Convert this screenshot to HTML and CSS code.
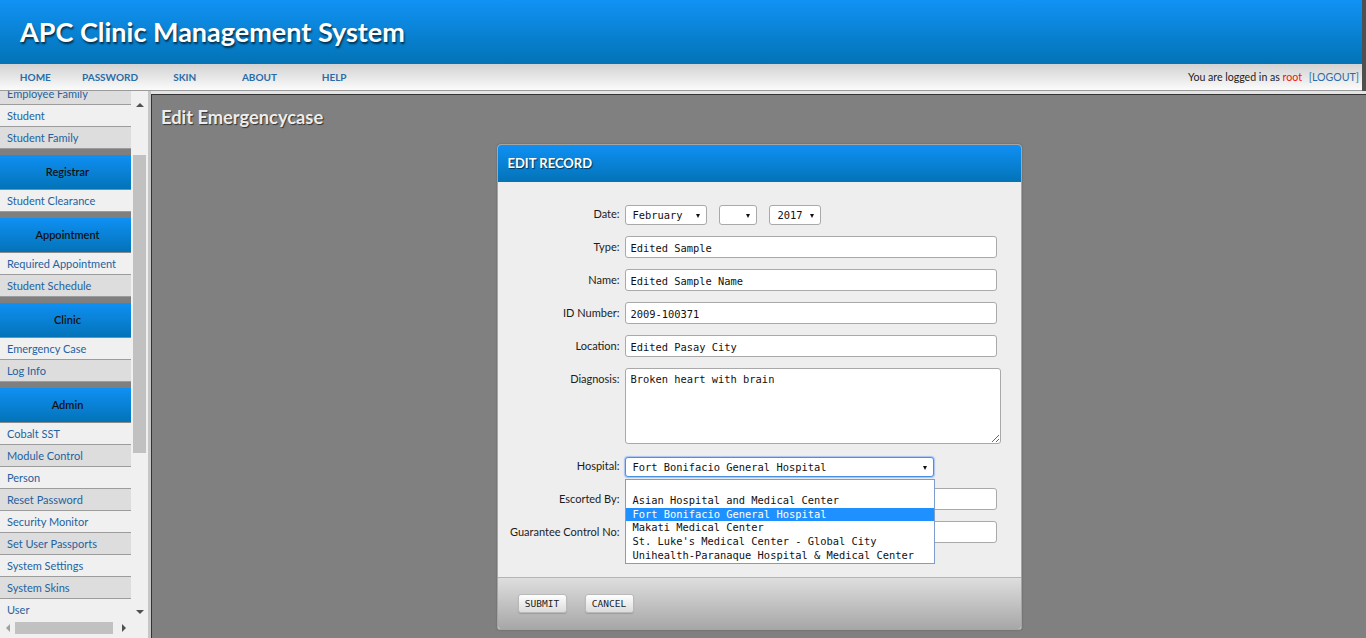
FILE: index.html
```html
<!DOCTYPE html>
<html lang="en">
<head>
<meta charset="utf-8">
<title>APC Clinic Management System</title>
<link rel="stylesheet" href="styles.css">
</head>
<body>
<div class="page">
  <header class="topbar"><h1>APC Clinic Management System</h1></header>
  <nav class="menubar">
    <ul class="menu">
      <li>HOME</li><li>PASSWORD</li><li>SKIN</li><li>ABOUT</li><li>HELP</li>
    </ul>
    <div class="user">You are logged in as <span class="root">root</span> <span class="logout">[LOGOUT]</span></div>
  </nav>
  <div class="workspace">
    <aside class="sidebar">
      <div class="side-main">
        <div class="side-view">
          <div class="side-list">
            <div class="item dark">Employee Family</div>
            <div class="item">Student</div>
            <div class="item dark">Student Family</div>
            <div class="sep"></div>
            <div class="group">Registrar</div>
            <div class="item">Student Clearance</div>
            <div class="sep"></div>
            <div class="group">Appointment</div>
            <div class="item">Required Appointment</div>
            <div class="item dark">Student Schedule</div>
            <div class="sep"></div>
            <div class="group">Clinic</div>
            <div class="item">Emergency Case</div>
            <div class="item dark">Log Info</div>
            <div class="sep"></div>
            <div class="group">Admin</div>
            <div class="item">Cobalt SST</div>
            <div class="item dark">Module Control</div>
            <div class="item">Person</div>
            <div class="item dark">Reset Password</div>
            <div class="item">Security Monitor</div>
            <div class="item dark">Set User Passports</div>
            <div class="item">System Settings</div>
            <div class="item dark">System Skins</div>
            <div class="item">User</div>
          </div>
        </div>
        <div class="vscroll">
          <div class="sb-btn up"><span class="tri tri-up"></span></div>
          <div class="vtrack"><div class="vthumb"></div></div>
          <div class="sb-btn down"><span class="tri tri-down"></span></div>
        </div>
      </div>
      <div class="hscroll-row">
        <div class="hscroll">
          <div class="hbtn"><span class="tri tri-left"></span></div>
          <div class="htrack"><div class="hthumb"></div></div>
          <div class="hbtn"><span class="tri tri-right"></span></div>
        </div>
        <div class="corner"></div>
      </div>
    </aside>
    <main class="content">
      <h2 class="page-title">Edit Emergencycase</h2>
      <section class="dialog">
        <div class="dialog-head">EDIT RECORD</div>
        <div class="dialog-body">
          <div class="form">
            <label class="lbl">Date:</label>
            <div class="field date-field">
              <div class="sel sel-month">February<span class="arrow"></span></div>
              <div class="sel sel-day"><span class="arrow"></span></div>
              <div class="sel sel-year">2017<span class="arrow"></span></div>
            </div>
            <label class="lbl">Type:</label>
            <div class="field"><input class="txt" type="text" value="Edited Sample"></div>
            <label class="lbl">Name:</label>
            <div class="field"><input class="txt" type="text" value="Edited Sample Name"></div>
            <label class="lbl">ID Number:</label>
            <div class="field"><input class="txt" type="text" value="2009-100371"></div>
            <label class="lbl">Location:</label>
            <div class="field"><input class="txt" type="text" value="Edited Pasay City"></div>
            <label class="lbl">Diagnosis:</label>
            <div class="field"><textarea class="area">Broken heart with brain</textarea></div>
            <label class="lbl">Hospital:</label>
            <div class="field hosp-field">
              <div class="sel sel-hosp">Fort Bonifacio General Hospital<span class="arrow"></span></div>
              <ul class="dropdown">
                <li>&nbsp;</li>
                <li>Asian Hospital and Medical Center</li>
                <li class="active">Fort Bonifacio General Hospital</li>
                <li>Makati Medical Center</li>
                <li>St. Luke's Medical Center - Global City</li>
                <li>Unihealth-Paranaque Hospital &amp; Medical Center</li>
              </ul>
            </div>
            <label class="lbl">Escorted By:</label>
            <div class="field"><input class="txt" type="text" value=""></div>
            <label class="lbl">Guarantee Control No:</label>
            <div class="field"><input class="txt" type="text" value=""></div>
          </div>
        </div>
        <div class="dialog-foot">
          <button class="btn" type="button">SUBMIT</button>
          <button class="btn" type="button">CANCEL</button>
        </div>
      </section>
    </main>
  </div>
</div>
</body>
</html>
```
FILE: styles.css
```css
* { box-sizing: border-box; }
html, body { margin: 0; padding: 0; }
body {
  background: #4f4f4f;
  font-family: Lato, "Liberation Sans", sans-serif;
  overflow: hidden;
}
.page {
  width: 1366px;
  height: 638px;
  display: flex;
  flex-direction: column;
}

/* header */
.topbar {
  width: 1362px;
  height: 64px;
  flex: 0 0 64px;
  background: linear-gradient(#1192f5, #0273b5);
  display: flex;
  align-items: center;
  padding-left: 20px;
}
.topbar h1 {
  margin: 0;
  color: #fff;
  font-size: 27px;
  font-weight: 700;
  text-shadow: 1px 2px 2px rgba(0,0,0,.65);
  position: relative;
  top: -1px;
}

/* menubar */
.menubar {
  width: 1362px;
  height: 27px;
  flex: 0 0 27px;
  background: linear-gradient(#d2d2d2, #fbfbfb);
  border-bottom: 1px solid #9a9a9a;
  display: flex;
  align-items: center;
  justify-content: space-between;
  padding-right: 3px;
}
.menu {
  list-style: none;
  margin: 0 0 0 -2px;
  padding: 0;
  display: flex;
}
.menu li {
  width: 74.7px;
  text-align: center;
  font-size: 10px;
  font-weight: 700;
  color: #2a6ca8;
}
.user { font-size: 10.6px; color: #222; }
.user .root { color: #ee1111; }
.user .logout { color: #2a6ca8; margin-left: 4px; }

/* workspace */
.workspace {
  flex: 1;
  display: flex;
  min-height: 0;
  background: #e4e4e4;
}
.sidebar {
  width: 151px;
  flex: 0 0 151px;
  border-right: 3px solid #c6c6c6;
  display: flex;
  flex-direction: column;
  background: #f0f0f0;
}
.side-main { flex: 1; display: flex; min-height: 0; }
.side-view { width: 131px; overflow: hidden; }
.side-list { margin-top: -8px; }
.item {
  height: 22px;
  line-height: 21px;
  border-bottom: 1px solid #9c9c9c;
  padding-left: 7px;
  font-size: 11px;
  color: #2462a0;
  background: #f0f0f0;
  white-space: nowrap;
}
.item.dark { background: #dddddd; }
.sep { height: 6px; background: #7f7f7f; }
.group {
  height: 35px;
  line-height: 33px;
  border-bottom: 1px solid #8a8a8a;
  background: linear-gradient(#0f90f4, #0373b8);
  text-align: center;
  padding-left: 4px;
  font-size: 11px;
  font-weight: 600;
  color: #111;
}

/* fake scrollbars */
.vscroll {
  width: 17px;
  background: #f0f0f0;
  display: flex;
  flex-direction: column;
}
.sb-btn { display: flex; justify-content: center; }
.sb-btn.up { height: 22px; padding-top: 12px; }
.sb-btn.down { height: 17px; align-items: center; }
.vtrack { flex: 1; padding: 42px 2px 0; }
.vthumb { height: 298px; background: #c1c1c1; }
.tri { width: 0; height: 0; border-style: solid; display: block; }
.tri-up { border-width: 0 4px 4px 4px; border-color: transparent transparent #505050 transparent; }
.tri-down { border-width: 4px 4px 0 4px; border-color: #505050 transparent transparent transparent; }
.tri-left { border-width: 4px 4px 4px 0; border-color: transparent #a0a0a0 transparent transparent; }
.tri-right { border-width: 4px 0 4px 4px; border-color: transparent transparent transparent #505050; }
.hscroll-row { height: 18px; display: flex; }
.hscroll { width: 131px; height: 16px; display: flex; background: #f0f0f0; }
.hbtn { width: 15px; display: flex; align-items: center; justify-content: center; }
.htrack { flex: 1; padding: 2px 0; }
.hthumb { height: 12px; background: #c1c1c1; margin-right: 3px; }
.corner { width: 17px; background: #f0f0f0; }

/* main */
.content {
  flex: 1;
  margin-top: 3px;
  background: #808080;
  border-top: 1px solid #333;
  border-left: 1px solid #333;
  min-width: 0;
}
.page-title {
  margin: 0;
  padding: 11px 0 0 9px;
  line-height: 22px;
  font-size: 18.3px;
  font-weight: 700;
  color: #ececec;
  text-shadow: 1px 1px 1px #333;
}
.dialog {
  width: 525px;
  margin: 16px auto 0;
  border: 1px solid #a5a5a5;
  border-radius: 4px 4px 3px 3px;
  background: #eeeeee;
  box-shadow: 0 0 2px rgba(0,0,0,.25);
}
.dialog-head {
  height: 37px;
  line-height: 37px;
  padding-left: 10px;
  background: linear-gradient(#0f90f4, #0373b8);
  border-radius: 3px 3px 0 0;
  color: #fff;
  font-size: 13px;
  font-weight: 700;
  text-shadow: 1px 1px 1px rgba(0,0,0,.6);
}
.dialog-body {
  height: 395px;
  padding: 21px 0 0 10px;
}
.form {
  display: grid;
  grid-template-columns: 112px auto;
  column-gap: 5px;
  row-gap: 11px;
  align-items: start;
}
.lbl {
  text-align: right;
  line-height: 22px;
  font-size: 11px;
  color: #1c1c1c;
  white-space: nowrap;
}
.field { display: flex; min-height: 22px; }
.txt {
  width: 372px;
  height: 22px;
  margin: 0;
  border: 1px solid #a9a9a9;
  border-radius: 3px;
  padding: 1px 5px 0;
  background: #fff;
  font-family: "DejaVu Sans Mono", "Liberation Mono", monospace;
  font-size: 10.4px;
  color: #111;
}
.area {
  width: 376px;
  height: 76px;
  margin: 0;
  border: 1px solid #a9a9a9;
  border-radius: 3px;
  padding: 4px 5px;
  background: #fff;
  font-family: "DejaVu Sans Mono", "Liberation Mono", monospace;
  font-size: 10.4px;
  line-height: 12px;
  color: #111;
  resize: both;
}
.date-field { align-items: flex-end; height: 22px; }
.sel {
  position: relative;
  height: 20px;
  line-height: 19px;
  border: 1px solid #a9a9a9;
  border-radius: 3px;
  background: #fff;
  padding-left: 7px;
  font-family: "DejaVu Sans Mono", "Liberation Mono", monospace;
  font-size: 10.4px;
  color: #111;
}
.arrow {
  position: absolute;
  right: 6px;
  top: 8px;
  width: 0; height: 0;
  border-style: solid;
  border-width: 4px 2.5px 0 2.5px;
  border-color: #111 transparent transparent transparent;
}
.sel-month { width: 82px; }
.sel-day { width: 38px; margin-left: 12px; }
.sel-year { width: 52px; margin-left: 12px; padding-left: 8px; }
.hosp-field { position: relative; align-items: flex-end; height: 22px; }
.sel-hosp {
  width: 309px;
  border-color: #4a90e2;
  box-shadow: 0 0 1px 1px rgba(77,144,254,.45);
}
.dropdown {
  position: absolute;
  left: 0;
  top: 24px;
  width: 310px;
  margin: 0;
  padding: 0;
  list-style: none;
  background: #fff;
  border: 1px solid #7f9dcc;
  z-index: 5;
}
.dropdown li {
  height: 13.8px;
  line-height: 13.8px;
  padding-left: 7px;
  font-family: "DejaVu Sans Mono", "Liberation Mono", monospace;
  font-size: 10.4px;
  color: #111;
  white-space: nowrap;
}
.dropdown li.active { background: #1e90ff; color: #fff; }
.dialog-foot {
  height: 52px;
  border-top: 1px solid #b4b4b4;
  background: linear-gradient(#dedede, #a7a7a7);
  border-radius: 0 0 3px 3px;
  padding: 16px 0 0 20px;
  display: flex;
  align-items: flex-start;
  gap: 18px;
}
.btn {
  width: 49px;
  height: 19px;
  margin: 0;
  padding: 0;
  border: 1px solid #b9b9b9;
  border-radius: 3px;
  background: linear-gradient(#fefefe, #dcdcdc);
  font-family: "DejaVu Sans Mono", "Liberation Mono", monospace;
  font-size: 9.5px;
  color: #222;
  box-shadow: 0 1px 1px rgba(0,0,0,.15);
}
```
